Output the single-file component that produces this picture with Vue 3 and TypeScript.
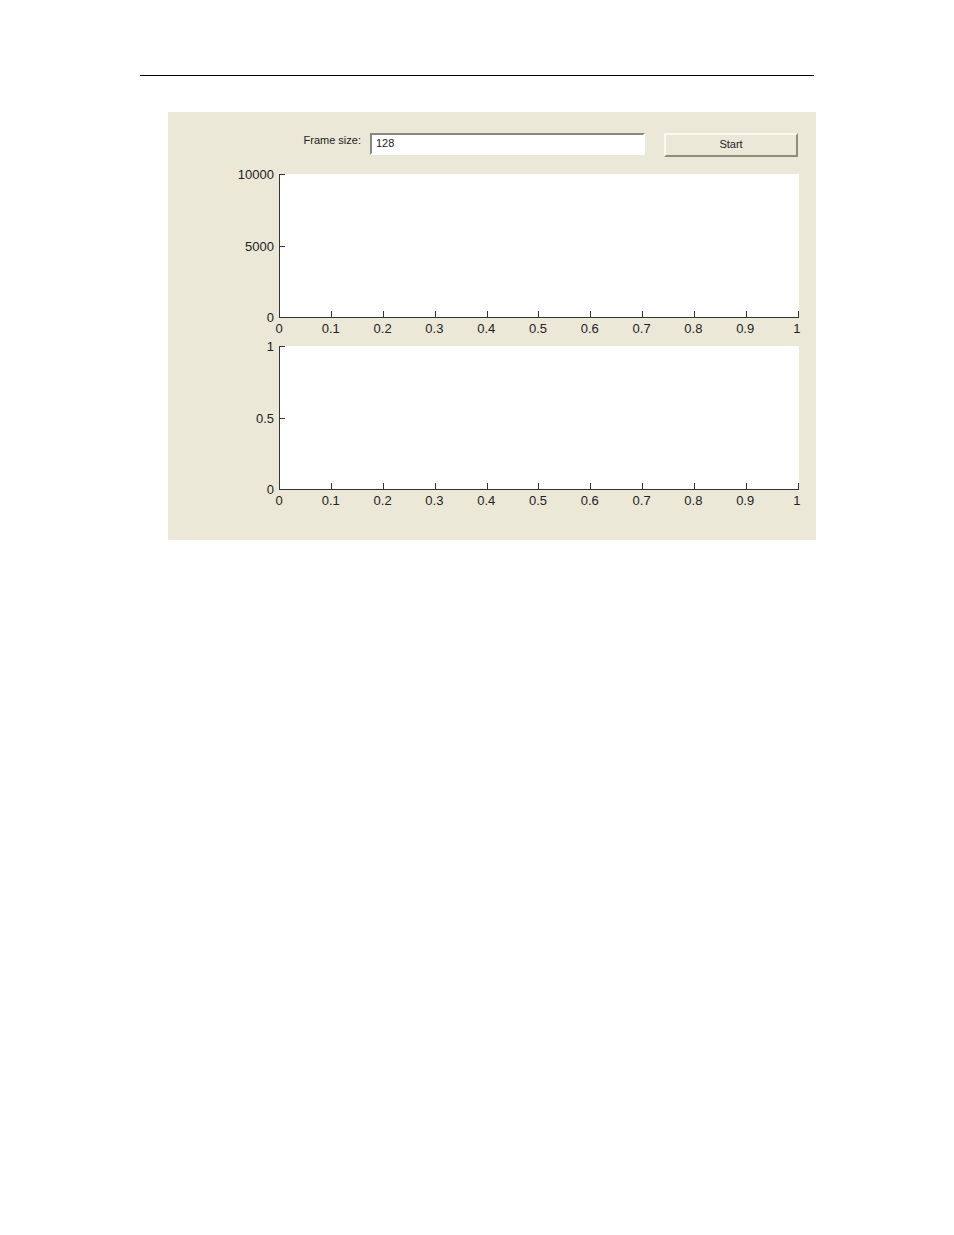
<script setup lang="ts">
import { ref } from 'vue'

interface Plot {
  id: string
  name: string
  yTicks: string[]
}

const frameSize = ref('128')
const xTicks = ['0', '0.1', '0.2', '0.3', '0.4', '0.5', '0.6', '0.7', '0.8', '0.9', '1']
const plots: Plot[] = [
  { id: 'upper', name: 'Upper axes', yTicks: ['10000', '5000', '0'] },
  { id: 'lower', name: 'Lower axes', yTicks: ['1', '0.5', '0'] },
]
</script>

<template>
  <main class="page">
    <hr class="rule" />
    <section class="panel">
      <form class="controls" @submit.prevent>
        <label for="frame-size">Frame size:</label>
        <input id="frame-size" v-model="frameSize" type="text" />
        <button type="submit">Start</button>
      </form>
      <div class="plots">
        <div v-for="plot in plots" :key="plot.id" class="plot" role="group" :aria-label="plot.name">
          <div class="y-labels">
            <span v-for="t in plot.yTicks" :key="t">{{ t }}</span>
          </div>
          <div class="area">
            <div class="y-ticks"><i v-for="t in plot.yTicks" :key="t"></i></div>
            <div class="x-ticks"><i v-for="t in xTicks" :key="t"></i></div>
          </div>
          <div class="x-labels">
            <span v-for="t in xTicks" :key="t">{{ t }}</span>
          </div>
        </div>
      </div>
    </section>
  </main>
</template>

<style>
body {
  margin: 0;
  background: #fff;
}
</style>

<style scoped>
.page {
  padding: 75px 140px 40px;
  font-family: "Liberation Sans", Arial, sans-serif;
  color: #222;
}
.rule {
  height: 1px;
  margin: 0;
  border: 0;
  background: #000;
}
.panel {
  margin: 36px -2px 0 28px;
  padding: 21px 17px 30px 0;
  background: #ebe8d7;
}
.controls {
  display: grid;
  grid-template-columns: 193px minmax(0, 1fr) 134px;
  align-items: start;
  margin-right: 1px;
  font-size: 11px;
  line-height: 15px;
}
.controls label {
  text-align: right;
}
.controls input {
  box-sizing: border-box;
  height: 22px;
  min-width: 0;
  margin: 0 19px 0 9px;
  padding: 0 4px 2px;
  border: 2px solid;
  border-color: #8a887d #fff #fff #8a887d;
  border-radius: 0;
  background: #fff;
  color: inherit;
  font: inherit;
  outline: 0;
}
.controls button {
  height: 24px;
  padding: 0 0 2px;
  border: 2px solid;
  border-color: #faf9f1 #8f8c7c #8f8c7c #faf9f1;
  border-radius: 0;
  background: #ebe8d7;
  color: inherit;
  font: inherit;
}
.plots {
  display: grid;
  gap: 6px;
  margin-top: 17px;
}
.plot {
  display: grid;
  grid-template-columns: 106px minmax(0, 1fr);
  column-gap: 5px;
  font-size: 13px;
}
.y-labels,
.y-ticks {
  display: flex;
  flex-direction: column;
  justify-content: space-between;
}
.y-labels span {
  display: flex;
  align-items: center;
  justify-content: flex-end;
  height: 1px;
}
.area {
  display: grid;
  box-sizing: border-box;
  height: 144px;
  background: #fff;
}
.y-ticks,
.x-ticks {
  grid-area: 1 / 1;
}
.y-ticks {
  border-left: 1px solid #333;
}
.y-ticks i {
  width: 5px;
  height: 1px;
  background: #333;
}
.x-ticks {
  display: flex;
  align-items: flex-end;
  justify-content: space-between;
  border-bottom: 1px solid #333;
}
.x-ticks i {
  width: 1px;
  height: 6px;
  background: #333;
}
.x-labels {
  display: flex;
  grid-column: 2;
  justify-content: space-between;
  height: 22px;
  margin-right: 2px;
  line-height: 22px;
}
.x-labels span {
  display: flex;
  justify-content: center;
  width: 0;
}
.plots {
  margin-bottom: -2px;
}
</style>
